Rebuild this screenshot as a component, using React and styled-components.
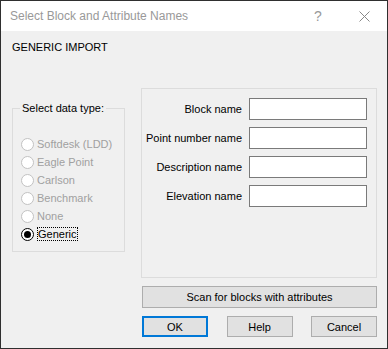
import React from 'react';
import styled, { createGlobalStyle } from 'styled-components';

const Global = createGlobalStyle`
  html, body { margin: 0; padding: 0; background: #f0f0f0; }
  * { box-sizing: border-box; }
`;

const Window = styled.div`
  width: 388px;
  height: 349px;
  border: 1px solid #2f2f2f;
  display: flex;
  flex-direction: column;
  font-family: "Liberation Sans", Arial, sans-serif;
  font-size: 11px;
  color: #000;
  background: #f0f0f0;
`;

const TitleBar = styled.div`
  height: 30px;
  background: #fff;
  display: flex;
  align-items: center;
  padding-left: 9px;
  flex-shrink: 0;
`;

const Title = styled.div`
  flex: 1;
  font-size: 12px;
  color: #999;
  padding-bottom: 1px;
`;

const TitleButton = styled.div`
  width: 46px;
  height: 30px;
  display: flex;
  align-items: center;
  justify-content: center;
  color: #999;
  font-size: 14px;
`;

const Body = styled.div`
  flex: 1;
  padding: 10px 10px 0 11px;
`;

const Heading = styled.div`
  line-height: 13px;
  height: 13px;
`;

const Main = styled.div`
  display: flex;
  gap: 16px;
  margin-top: 34px;
`;

const Group = styled.fieldset`
  width: 113px;
  margin: 14px 0 0 0;
  padding: 20px 8px 8px 8px;
  border: 1px solid #dcdcdc;
  min-inline-size: 0;
  align-self: flex-start;
`;

const Legend = styled.legend`
  padding: 0 2px;
  margin-left: -1px;
  line-height: 13px;
`;

const RadioRow = styled.div`
  height: 18px;
  display: flex;
  align-items: center;
  gap: 3px;
  color: ${p => (p.$disabled ? '#a0a0a0' : '#000')};
`;

const RadioCircle = styled.span`
  width: 13px;
  height: 13px;
  border-radius: 50%;
  border: 1px solid ${p => (p.$checked ? '#000' : '#c2c2c2')};
  background: #fff;
  display: flex;
  align-items: center;
  justify-content: center;
  flex-shrink: 0;
  &::after {
    content: '';
    width: 7px;
    height: 7px;
    border-radius: 50%;
    background: #000;
    display: ${p => (p.$checked ? 'block' : 'none')};
  }
`;

const FocusText = styled.span`
  border: 1px dotted #000;
  line-height: 12px;
`;

const RightCol = styled.div`
  width: 236px;
  display: flex;
  flex-direction: column;
`;

const Panel = styled.div`
  height: 190px;
  border: 1px solid #dcdcdc;
  padding: 9px 9px 0 0;
  display: flex;
  flex-direction: column;
  gap: 7px;
`;

const FieldRow = styled.div`
  display: flex;
  align-items: center;
  height: 22px;
`;

const Label = styled.label`
  flex: 1;
  text-align: right;
  margin-right: 7px;
`;

const Input = styled.div`
  width: 118px;
  height: 22px;
  background: #fff;
  border: 1px solid #7a7a7a;
`;

const Button = styled.button`
  font-family: inherit;
  font-size: 11px;
  color: #000;
  height: ${p => (p.$tall ? 22 : 21)}px;
  width: ${p => (p.$wide ? 'auto' : '66px')};
  background: #e1e1e1;
  border: ${p => (p.$default ? '2px solid #0078d7' : '1px solid #adadad')};
  padding: 0;
  margin: 0;
`;

const ScanButton = styled(Button)`
  margin: 8px 0 0 1px;
`;

const ButtonRow = styled.div`
  display: flex;
  justify-content: space-between;
  margin: 8px 0 0 1px;
`;

const types = ['Softdesk (LDD)', 'Eagle Point', 'Carlson', 'Benchmark', 'None'];
const fields = ['Block name', 'Point number name', 'Description name', 'Elevation name'];

export default function App() {
  return (
    <>
      <Global />
      <Window>
        <TitleBar>
          <Title>Select Block and Attribute Names</Title>
          <TitleButton>?</TitleButton>
          <TitleButton>
            <svg width="11" height="11" viewBox="0 0 11 11">
              <path d="M0.5 0.5 L10.5 10.5 M10.5 0.5 L0.5 10.5" stroke="#888" strokeWidth="1" fill="none" />
            </svg>
          </TitleButton>
        </TitleBar>
        <Body>
          <Heading>GENERIC IMPORT</Heading>
          <Main>
            <Group>
              <Legend>Select data type:</Legend>
              {types.map(t => (
                <RadioRow key={t} $disabled>
                  <RadioCircle />
                  <span>{t}</span>
                </RadioRow>
              ))}
              <RadioRow>
                <RadioCircle $checked />
                <FocusText>Generic</FocusText>
              </RadioRow>
            </Group>
            <RightCol>
              <Panel>
                {fields.map(f => (
                  <FieldRow key={f}>
                    <Label>{f}</Label>
                    <Input />
                  </FieldRow>
                ))}
              </Panel>
              <ScanButton $wide $tall>Scan for blocks with attributes</ScanButton>
              <ButtonRow>
                <Button $default>OK</Button>
                <Button>Help</Button>
                <Button>Cancel</Button>
              </ButtonRow>
            </RightCol>
          </Main>
        </Body>
      </Window>
    </>
  );
}
